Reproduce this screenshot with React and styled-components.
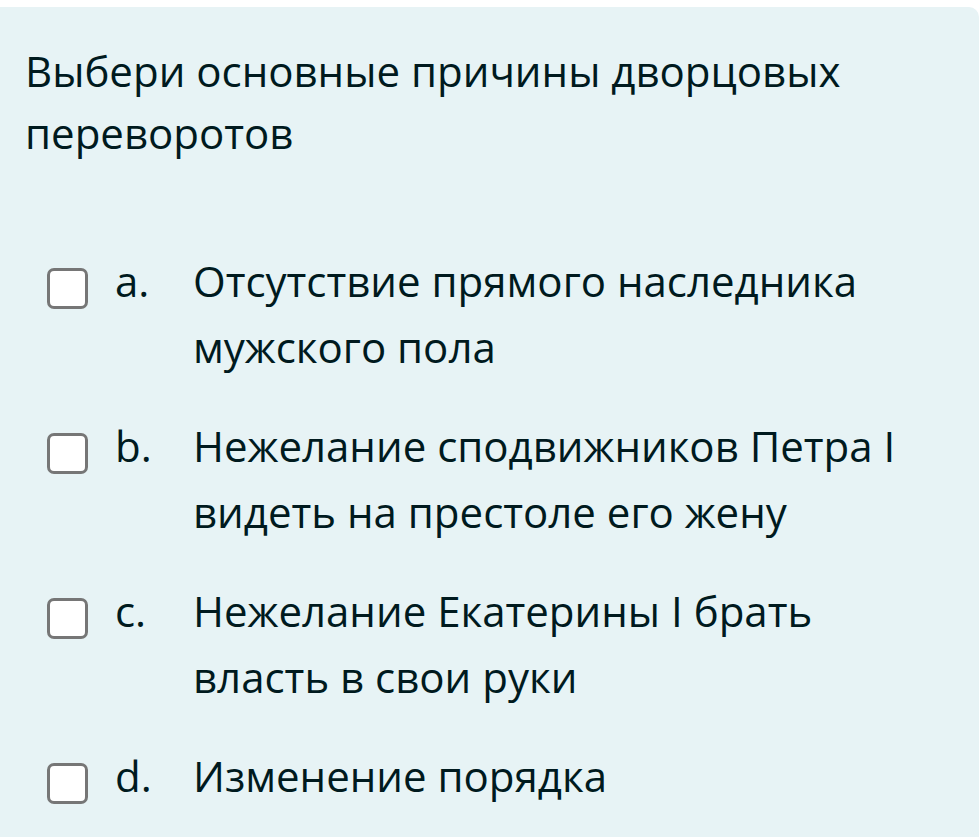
import React from "react";
import styled, { createGlobalStyle } from "styled-components";

const GlobalStyle = createGlobalStyle`
  html, body {
    margin: 0;
    padding: 0;
    background: #ffffff;
  }
  body {
    font-family: "Open Sans", "Noto Sans", sans-serif;
    color: #001a1e;
  }
`;

const options = [
  { letter: "a.", text: "Отсутствие прямого наследника мужского пола" },
  { letter: "b.", text: "Нежелание сподвижников Петра I видеть на престоле его жену" },
  { letter: "c.", text: "Нежелание Екатерины I брать власть в свои руки" },
  { letter: "d.", text: "Изменение порядка" },
];

function App() {
  return (
    <>
      <GlobalStyle />
      <Formulation>
        <QuestionText>Выбери основные причины дворцовых переворотов</QuestionText>
        <Answers>
          {options.map((o) => (
            <Option key={o.letter}>
              <Check type="checkbox" />
              <Letter>{o.letter}</Letter>
              <Label>{o.text}</Label>
            </Option>
          ))}
        </Answers>
      </Formulation>
    </>
  );
}

const Formulation = styled.div`
  margin-top: 7px;
  min-height: 830px;
  background: #e7f3f5;
  border-top-right-radius: 10px;
  padding: 33px 50px 0 25px;
  box-sizing: border-box;
`;

const QuestionText = styled.div`
  font-size: 42px;
  line-height: 62px;
`;

const Answers = styled.div`
  margin-top: 84px;
  padding-left: 22px;
  display: flex;
  flex-direction: column;
  gap: 33px;
`;

const Option = styled.div`
  display: flex;
  align-items: flex-start;
  font-size: 42px;
  line-height: 66px;
`;

const Check = styled.input`
  appearance: none;
  flex: none;
  width: 41px;
  height: 41px;
  margin: 20px 0 0 0;
  box-sizing: border-box;
  border: 3px solid #767676;
  border-radius: 7px;
  background: #ffffff;
`;

const Letter = styled.span`
  flex: none;
  width: 78px;
  margin-left: 27px;
`;

const Label = styled.span`
  flex: 1;
`;

export default App;
